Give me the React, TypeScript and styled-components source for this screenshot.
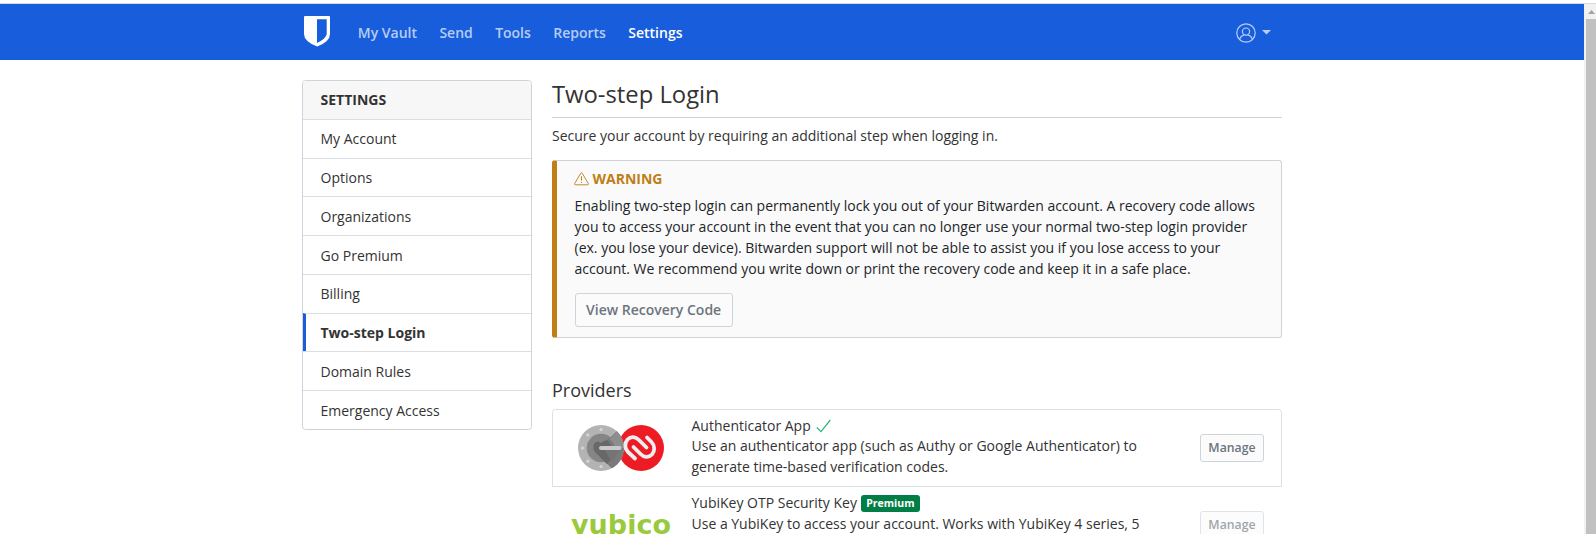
import React from "react";
import styled, { createGlobalStyle, css } from "styled-components";

const GlobalStyle = createGlobalStyle`
  *, *::before, *::after { box-sizing: border-box; }
  html, body { margin: 0; padding: 0; overflow: hidden; }
  body {
    font-family: "Open Sans", "Liberation Sans", sans-serif;
    font-size: 14px;
    line-height: 21px;
    color: #333;
    background: #fff;
  }
`;

const Window = styled.div`
  display: flex;
  flex-direction: column;
  height: 534px;
  overflow: hidden;
`;
const TopEdge = styled.div`
  flex: none;
  height: 4px;
  border-bottom: 1px solid #d8dadd;
`;
const Viewport = styled.div`
  display: flex;
  flex: 1;
  min-height: 0;
`;
const Page = styled.div`
  flex: 1;
  min-width: 0;
  overflow: hidden;
`;
const Scrollbar = styled.div`
  width: 12px;
  flex: none;
  overflow: hidden;
  background: #f1f1f1;
  padding-left: 2px;
  display: flex;
  flex-direction: column;
`;
const ScrollArrow = styled.svg`
  display: block;
  flex: none;
  width: 10px;
  height: 15px;
`;
const Thumb = styled.div`
  flex: 1;
  background: #c1c1c1;
`;

const Navbar = styled.nav`
  height: 56px;
  background: #175ddc;
`;
const Container = styled.div`
  width: 1000px;
  margin: 0 auto;
  padding: 0 10px;
`;
const NavInner = styled(Container)`
  display: flex;
  align-items: center;
  height: 100%;
`;
const Shield = styled.svg`
  display: block;
  width: 28px;
  height: 32px;
  margin-right: 16.6px;
`;
const NavLink = styled.a<{ $active?: boolean }>`
  padding: 0 11.2px;
  font-weight: 600;
  color: ${(p) => (p.$active ? "#fff" : "rgba(255, 255, 255, 0.7)")};
`;
const Profile = styled.div`
  margin-left: auto;
  padding: 2px 11px 0 0;
  display: flex;
  align-items: center;
  gap: 6px;
`;
const Caret = styled.svg`
  display: block;
  width: 9px;
  height: 6px;
  margin-bottom: 1px;
`;

const Columns = styled(Container)`
  display: flex;
  gap: 20px;
  padding-top: 20px;
`;
const Card = styled.aside`
  flex: none;
  width: 230px;
  height: 350px;
  border: 1px solid #ced4dc;
  border-radius: 3.5px;
  overflow: hidden;
`;
const CardHeader = styled.div`
  height: 38px;
  padding: 8px 17.5px;
  background: #f7f7f7;
  font-weight: 700;
`;
const MenuItem = styled.a<{ $active?: boolean }>`
  display: block;
  height: 38.74px;
  padding: 8.45px 17.5px 0;
  border-top: 1px solid #dadde1;
  ${(p) =>
    p.$active &&
    css`
      padding-left: 14.5px;
      border-left: 3px solid #175ddc;
      font-weight: 700;
    `}
`;

const Main = styled.main`
  flex: 1;
  min-width: 0;
`;
const Title = styled.h1`
  margin: 0 0 7px;
  height: 38px;
  border-bottom: 1px solid #ced4dc;
  font-size: 23.8px;
  font-weight: 400;
  line-height: 28px;
`;
const Intro = styled.p`
  margin: 0 0 14px;
`;
const Callout = styled.section`
  height: 178px;
  padding: 7px 20px 0 17.5px;
  border: 1px solid #ced4dc;
  border-left: 5px solid #bf7e16;
  border-radius: 3px;
  background: #fafafa;
  color: #212529;
`;
const CalloutTitle = styled.h3`
  display: flex;
  align-items: center;
  gap: 3.5px;
  margin: 0 0 6px -0.5px;
  font-size: 14px;
  line-height: 21px;
  font-weight: 700;
  color: #bf7e16;
`;
const CalloutText = styled.p`
  margin: 0 0 14px;
`;
const Button = styled.button<{ $small?: boolean }>`
  display: block;
  height: ${(p) => (p.$small ? 28 : 34)}px;
  padding: 0 ${(p) => (p.$small ? 7.5 : 10.5)}px 1px;
  border: 1px solid #ced4dc;
  border-radius: 3px;
  background: #fbfbfb;
  color: #6c757d;
  font-family: inherit;
  font-size: ${(p) => (p.$small ? 12.25 : 14)}px;
  font-weight: 600;
  white-space: nowrap;
  &:disabled { opacity: 0.65; }
`;

const SectionTitle = styled.h2`
  margin: 42px 0 8px;
  font-size: 18px;
  font-weight: 400;
  line-height: 21px;
`;
const Provider = styled.div<{ $first?: boolean }>`
  display: flex;
  align-items: center;
  height: ${(p) => (p.$first ? 78 : 77)}px;
  padding: 0 17px;
  border: 1px solid ${(p) => (p.$first ? "#dedfe1" : "transparent")};
  border-top-width: ${(p) => (p.$first ? 1 : 0)}px;
  border-radius: ${(p) => (p.$first ? "3.5px 3.5px 0 0" : "0")};
`;
const LogoCell = styled.div`
  width: 102px;
  margin-right: 19.5px;
  display: flex;
  justify-content: center;
`;
const Yubico = styled.span`
  font-family: "DejaVu Sans", Verdana, sans-serif;
  font-weight: 700;
  font-size: 27px;
  line-height: 32px;
  color: #9aca3c;
`;
const ProviderText = styled.div<{ $tight?: boolean }>`
  width: 462px;
  margin-right: auto;
  margin-bottom: ${(p) => (p.$tight ? 4 : 3)}px;
`;
const ProviderName = styled.div<{ $tight?: boolean }>`
  display: flex;
  align-items: center;
  height: ${(p) => (p.$tight ? 20 : 21)}px;
`;
const Badge = styled.span`
  margin: 2px 0 0 4px;
  height: 17px;
  padding: 0 5.3px;
  border-radius: 3px;
  background: #017e45;
  color: #fff;
  font-size: 10.5px;
  line-height: 17px;
  font-weight: 700;
`;
const Check = styled.svg`
  width: 15px;
  height: 14px;
  margin: 1px 0 0 5px;
`;

const sections = [
  "My Account",
  "Options",
  "Organizations",
  "Go Premium",
  "Billing",
  "Two-step Login",
  "Domain Rules",
  "Emergency Access",
];

const bolts = [0, 45, 90, 135, 180, 225, 270, 315];

function AuthenticatorLogo() {
  return (
    <svg width="86" height="46" viewBox="0 0 86 46">
      <defs>
        <clipPath id="dial">
          <circle cx="23" cy="23" r="23" />
        </clipPath>
      </defs>
      <circle cx="63" cy="23" r="23" fill="#ed1c24" />
      <circle cx="23" cy="23" r="23" fill="#b3b3b3" />
      <circle cx="23" cy="23" r="14.3" fill="#858585" />
      <g clipPath="url(#dial)">
        <path d="M29.5 15L40 5L50 12V42L34 43.5L17 27L23 23Z" fill="#7a7a7a" />
        <path d="M40 5L50 12V23H37Q36 17 31.5 14Z" fill="#8d8d8d" />
      </g>
      {bolts.map((a) => (
        <circle
          key={a}
          cx="23"
          cy="4.5"
          r="1.6"
          fill="#d6d6d6"
          transform={`rotate(${a} 23 23)`}
          opacity={a > 30 && a < 150 ? 0 : 1}
        />
      ))}
      <path d="M23 18Q18.5 14.5 16 19Q14.3 23 17 27L29 39L33 34L27 25H32L35 23L29.5 15Q26 15 23 18Z" fill="#686868" />
      <path d="M27 25H42L36 34L33 36Z" fill="#757575" />
      <path d="M23 23H41.5" stroke="#c9c9c9" strokeWidth="4" strokeLinecap="round" />
      <g fill="none" stroke="#eeeef0" strokeWidth="3.8" strokeLinecap="round" strokeLinejoin="round">
        <path d="M57 33.5L50 27C46.5 23.5 46.5 18 49.5 14.5C53 11 57.5 11.5 61 15L68.5 22.5" />
        <path d="M69 12.5L73.5 17C77 20.5 77 26 74 29.5C70.5 33 66 32.5 62.5 29L55.5 22" />
      </g>
    </svg>
  );
}

export default function App() {
  return (
    <>
      <GlobalStyle />
      <Window>
        <TopEdge />
        <Viewport>
          <Page>
            <Navbar>
              <NavInner>
                <Shield viewBox="0 0 28 32">
                  <path d="M3 0H27Q28 0 28 1V18Q28 25.5 15.2 30.6Q2 25.5 2 18V1Q2 0 3 0Z" fill="#fff" />
                  <path d="M15 3.3H24.7V18Q24.2 22.5 15 27Z" fill="#175ddc" />
                </Shield>
                <NavLink>My Vault</NavLink>
                <NavLink>Send</NavLink>
                <NavLink>Tools</NavLink>
                <NavLink>Reports</NavLink>
                <NavLink $active>Settings</NavLink>
                <Profile>
                  <svg width="20" height="20" viewBox="0 0 20 20" fill="none" stroke="#b9cef5" strokeWidth="1.2">
                    <circle cx="10" cy="10" r="9.2" />
                    <circle cx="10" cy="8.6" r="3.6" />
                    <path d="M3.6 16.4Q5 12.6 8.2 12.2M16.4 16.4Q15 12.6 11.8 12.2" />
                  </svg>
                  <Caret viewBox="0 0 9 6">
                    <path d="M0 0H9L4.5 4.5Z" fill="#b9cef5" />
                  </Caret>
                </Profile>
              </NavInner>
            </Navbar>
            <Columns>
              <Card>
                <CardHeader>SETTINGS</CardHeader>
                {sections.map((s) => (
                  <MenuItem key={s} $active={s === "Two-step Login"}>
                    {s}
                  </MenuItem>
                ))}
              </Card>
              <Main>
                <Title>Two-step Login</Title>
                <Intro>Secure your account by requiring an additional step when logging in.</Intro>
                <Callout>
                  <CalloutTitle>
                    <svg width="15" height="14" viewBox="0 0 15 14" fill="none" stroke="#bf7e16" strokeLinejoin="round">
                      <path d="M6.7 1.3Q7.5.2 8.3 1.3L14.3 11.5Q14.8 12.8 13.6 12.8H1.4Q.2 12.8.7 11.5Z" strokeWidth=".9" />
                      <path d="M7.5 4.3V8.6M7.5 10V11" strokeWidth="1" />
                    </svg>
                    WARNING
                  </CalloutTitle>
                  <CalloutText>
                    Enabling two-step login can permanently lock you out of your Bitwarden account. A recovery code
                    allows you to access your account in the event that you can no longer use your normal two-step
                    login provider (ex. you lose your device). Bitwarden support will not be able to assist you if you
                    lose access to your account. We recommend you write down or print the recovery code and keep it in
                    a safe place.
                  </CalloutText>
                  <Button>View Recovery Code</Button>
                </Callout>
                <SectionTitle>Providers</SectionTitle>
                <Provider $first>
                  <LogoCell>
                    <AuthenticatorLogo />
                  </LogoCell>
                  <ProviderText $tight>
                    <ProviderName $tight>
                      Authenticator App
                      <Check viewBox="0 0 15 14" fill="none" stroke="#2cb57c" strokeWidth="1.2">
                        <path d="M.8 8.5L5 12.6L14.3 1" />
                      </Check>
                    </ProviderName>
                    Use an authenticator app (such as Authy or Google Authenticator) to generate time-based
                    verification codes.
                  </ProviderText>
                  <Button $small>Manage</Button>
                </Provider>
                <Provider>
                  <LogoCell>
                    <Yubico>yubico</Yubico>
                  </LogoCell>
                  <ProviderText>
                    <ProviderName>
                      YubiKey OTP Security Key
                      <Badge>Premium</Badge>
                    </ProviderName>
                    Use a YubiKey to access your account. Works with YubiKey 4 series, 5 series, and NEO devices.
                  </ProviderText>
                  <Button $small disabled>
                    Manage
                  </Button>
                </Provider>
              </Main>
            </Columns>
          </Page>
          <Scrollbar>
            <ScrollArrow viewBox="0 0 10 15">
              <path d="M2 10L5.5 6L9 10Z" fill="#a3a3a3" />
            </ScrollArrow>
            <Thumb />
          </Scrollbar>
        </Viewport>
      </Window>
    </>
  );
}
